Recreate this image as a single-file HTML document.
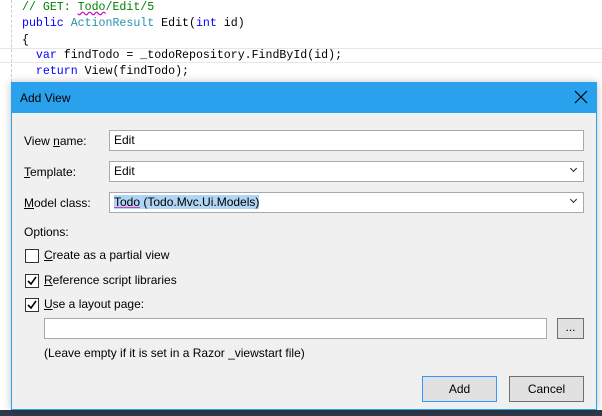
<!DOCTYPE html>
<html><head><style>
*{margin:0;padding:0;box-sizing:border-box}
body{width:602px;height:416px;background:#fff;position:relative;overflow:hidden;font-family:"Liberation Sans",sans-serif;font-size:12px;color:#000}
.code{position:absolute;left:22px;font-family:"Liberation Mono",monospace;font-size:11.6px;line-height:16px;white-space:pre}
.a{position:absolute}
.inp{position:absolute;background:#fff;border:1px solid #a9a9a9;height:21px;padding:2px 4px;font-size:12px;line-height:15px}
.lbl{position:absolute;font-size:12px}
.cb{position:absolute;left:25px;width:14px;height:14px;border:1px solid #333;background:#fff}
.btn{position:absolute;height:26px;background:#e1e1e1;border:1px solid #adadad;text-align:center;line-height:24px;font-size:12px}
.chev{position:absolute;right:7px;top:4px;width:5px;height:5px;border-right:1.5px solid #222;border-bottom:1.5px solid #222;transform:rotate(45deg)}
</style></head><body>
<div class="a" style="left:11px;top:0;height:82px;border-left:1px dashed #ccc"></div>
<div class="a" style="left:0;top:48px;width:602px;height:15px;border-top:1px solid #e6e6e6;border-bottom:1px solid #e6e6e6"></div>
<div class="code" style="top:0px;color:#008000">// GET: <span style="text-decoration:underline wavy #c0c">Todo</span>/Edit/5</div>
<div class="code" style="top:16px"><span style="color:#00f">public</span> <span style="color:#2b91af">ActionResult</span> Edit(<span style="color:#00f">int</span> id)</div>
<div class="code" style="top:33px">{</div>
<div class="code" style="top:48px">  <span style="color:#00f">var</span> findTodo = _todoRepository.FindById(id);</div>
<div class="code" style="top:64px">  <span style="color:#00f">return</span> View(findTodo);</div>
<div class="a" style="left:0;top:410px;width:602px;height:6px;background:#2d3a4a"></div>
<div class="a" style="left:11px;top:82px;width:586px;height:328px;background:#f0f0f0;border:1px solid #2aa1ec;box-shadow:0 0 8px rgba(0,0,0,.25)"></div>
<div class="a" style="left:11px;top:82px;width:586px;height:31px;background:#2aa1ec"></div>
<div class="lbl" style="left:20px;top:91px;font-size:12px">Add View</div>
<svg class="a" style="left:574px;top:90px" width="14" height="14"><path d="M1 1L13 13M13 1L1 13" stroke="#000" stroke-width="1.2"/></svg>
<div class="lbl" style="left:24px;top:134px">View <u>n</u>ame:</div>
<div class="inp" style="left:109px;top:130px;width:475px">Edit</div>
<div class="lbl" style="left:24px;top:165px"><u>T</u>emplate:</div>
<div class="inp" style="left:109px;top:161px;width:475px">Edit<div class="chev"></div></div>
<div class="lbl" style="left:24px;top:196px"><u>M</u>odel class:</div>
<div class="inp" style="left:109px;top:192px;width:475px"><span style="background:#b0d4f4"><span style="text-decoration:underline #d040d0">Todo</span> (Todo.Mvc.Ui.Models)</span><div class="chev"></div></div>
<div class="lbl" style="left:24px;top:225px">Options:</div>
<div class="cb" style="top:249px"></div><div class="lbl" style="left:44px;top:248px"><u>C</u>reate as a partial view</div>
<div class="cb" style="top:274px"><svg width="12" height="12" style="display:block"><path d="M2 6L5 9L10 2" stroke="#000" stroke-width="1.6" fill="none"/></svg></div><div class="lbl" style="left:44px;top:273px"><u>R</u>eference script libraries</div>
<div class="cb" style="top:298px"><svg width="12" height="12" style="display:block"><path d="M2 6L5 9L10 2" stroke="#000" stroke-width="1.6" fill="none"/></svg></div><div class="lbl" style="left:44px;top:297px"><u>U</u>se a layout page:</div>
<div class="inp" style="left:44px;top:318px;width:503px"></div>
<div class="btn" style="left:557px;top:318px;width:27px;height:21px;line-height:17px;border-color:#707070">...</div>
<div class="lbl" style="left:44px;top:346px">(Leave empty if it is set in a Razor _viewstart file)</div>
<div class="btn" style="left:422px;top:376px;width:75px;border-color:#3399ff">Add</div>
<div class="btn" style="left:509px;top:376px;width:75px;border-color:#707070">Cancel</div>
</body></html>
